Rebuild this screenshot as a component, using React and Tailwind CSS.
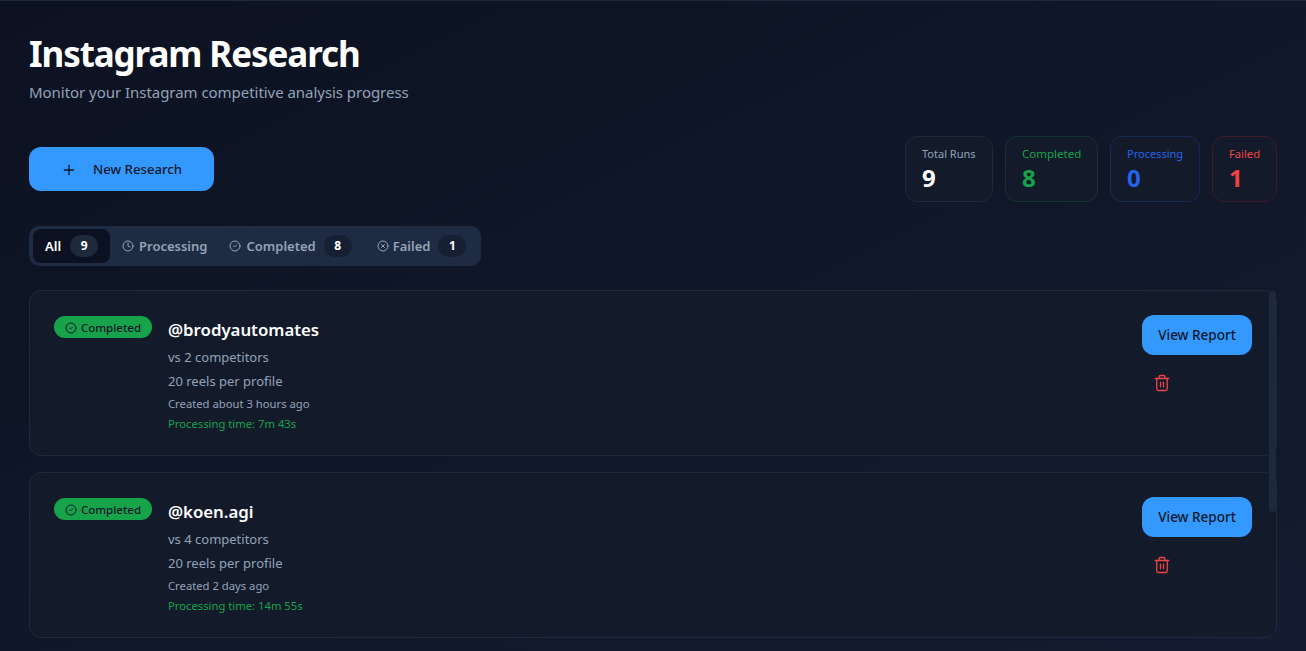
import { Plus, Clock, CircleCheck, CircleX, Trash2 } from "lucide-react";

const stats = [
  { label: "Total Runs", value: 9, width: "w-[88px]", size: "text-[11px]", border: "border-[#1e293b]", labelColor: "text-[#94a3b8]", valueColor: "text-white" },
  { label: "Completed", value: 8, width: "w-[93px]", size: "text-[11.5px]", border: "border-[#14352f]", labelColor: "text-[#16a34a]", valueColor: "text-[#16a34a]" },
  { label: "Processing", value: 0, width: "w-[90px]", size: "text-[11px]", border: "border-[#172a55]", labelColor: "text-[#2563eb]", valueColor: "text-[#2563eb]" },
  { label: "Failed", value: 1, width: "w-[65px]", size: "text-[11.2px]", border: "border-[#3b1c28]", labelColor: "text-[#ef4444]", valueColor: "text-[#ef4444]" },
];

const runs = [
  { handle: "@brodyautomates", competitors: "vs 2 competitors", reels: "20 reels per profile", created: "Created about 3 hours ago", time: "Processing time: 7m 43s" },
  { handle: "@koen.agi", competitors: "vs 4 competitors", reels: "20 reels per profile", created: "Created 2 days ago", time: "Processing time: 14m 55s" },
];

const Badge = ({ children, active }) => (
  <span
    className={`flex h-[22px] w-7 items-center justify-center rounded-full text-xs font-bold text-white ${
      active ? "bg-[#1e293b]" : "bg-[#172033]"
    }`}
  >
    {children}
  </span>
);

const RunCard = ({ run }) => (
  <div className="flex h-[166px] shrink-0 justify-between rounded-xl border border-[#1e293b] bg-[#131b2b] pt-[24px] pr-6 pl-6">
    <div className="flex">
      <span className="mt-[1px] flex h-[22px] w-[98px] items-center justify-center gap-1 rounded-full bg-[#16a34a] pt-[1px] text-[11.5px] font-medium text-[#0f172a]">
        <CircleCheck size={12} strokeWidth={2} />
        Completed
      </span>
      <div className="ml-4 flex flex-col">
        <div className="mt-[2px] text-[16.8px] leading-[26px] font-semibold text-white">{run.handle}</div>
        <div className="mt-[2px] text-[13px] leading-6 text-[#94a3b8]">{run.competitors}</div>
        <div className="text-[13px] leading-6 text-[#94a3b8]">{run.reels}</div>
        <div className="mt-[2px] text-[11.25px] leading-[18px] text-[#94a3b8]">{run.created}</div>
        <div className="mt-[2px] text-[11.25px] leading-[18px] text-[#16a34a]">{run.time}</div>
      </div>
    </div>
    <div className="flex flex-col items-start">
      <button className="flex h-10 w-[110px] items-center justify-center rounded-xl bg-[#3399ff] text-[13.5px] font-medium text-[#0f172a]">
        View Report
      </button>
      <button className="mt-[19px] ml-[11px] text-[#ef4444]">
        <Trash2 size={18} strokeWidth={1.75} />
      </button>
    </div>
  </div>
);

export default function App() {
  return (
    <div className="h-[651px] w-full overflow-hidden border-t border-[#1e293b] bg-gradient-to-br from-[#0c1221] to-[#131c30] px-[29px] font-['Noto_Sans',sans-serif]">
      <h1 className="mt-[31px] text-[35px] leading-[44px] font-bold tracking-[-1.1px] text-white">Instagram Research</h1>
      <p className="mt-[4px] text-[15px] leading-6 tracking-[-0.04px] text-[#94a3b8]">Monitor your Instagram competitive analysis progress</p>

      <div className="mt-[32px] flex items-center justify-between">
        <button className="flex h-[44px] w-[185px] items-center gap-4 rounded-xl bg-[#3399ff] pt-[1px] pl-8 text-[13.2px] font-medium text-[#0f172a]">
          <Plus size={16} strokeWidth={2} />
          New Research
        </button>
        <div className="flex gap-3">
          {stats.map((s) => (
            <div key={s.label} className={`flex h-[66px] flex-col rounded-xl border bg-[#131b2b] pt-[9px] pl-4 ${s.width} ${s.border}`}>
              <span className={`leading-4 ${s.size} ${s.labelColor}`}>{s.label}</span>
              <span className={`text-[24px] leading-8 font-bold ${s.valueColor}`}>{s.value}</span>
            </div>
          ))}
        </div>
      </div>

      <div className="mt-[24px] flex h-10 w-[452px] items-center rounded-[10px] bg-[#1f2b42] pl-1 text-[13px] font-semibold text-[#94a3b8]">
        <div className="flex h-[34px] w-[77px] items-center gap-2 rounded-lg bg-[#0b1120] pl-3 text-white">
          <span className="pt-[2px]">All</span>
          <span className="ml-[1px]"><Badge active>9</Badge></span>
        </div>
        <div className="ml-3 flex items-center gap-[5px]">
          <Clock size={12} strokeWidth={2} />
          <span className="pt-[2px]">Processing</span>
        </div>
        <div className="ml-[22px] flex items-center gap-[5px]">
          <CircleCheck size={12} strokeWidth={2} />
          <span className="pt-[2px]">Completed</span>
          <span className="ml-[3px]"><Badge>8</Badge></span>
        </div>
        <div className="ml-[25px] flex items-center gap-1">
          <CircleX size={12} strokeWidth={2} />
          <span className="pt-[2px]">Failed</span>
          <span className="ml-1"><Badge>1</Badge></span>
        </div>
      </div>

      <div className="relative mt-[24px] flex flex-col gap-4">
        {runs.map((run) => (
          <RunCard key={run.handle} run={run} />
        ))}
        <div className="absolute top-[1px] right-[1px] h-[221px] w-[7px] rounded-full bg-[#1e293b]" />
      </div>
    </div>
  );
}
